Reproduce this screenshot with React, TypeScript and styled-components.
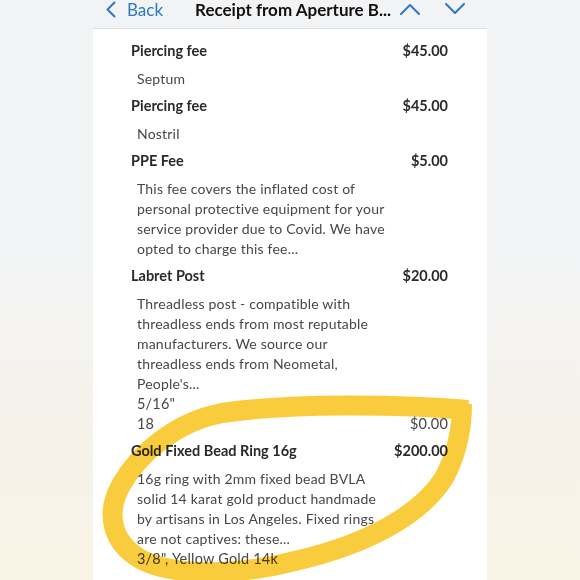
import React from "react";
import styled, { createGlobalStyle } from "styled-components";

type Item = {
  name: string;
  price: string;
  lines: string[];
  extra?: { left: string; right?: string }[];
};

const items: Item[] = [
  { name: "Piercing fee", price: "$45.00", lines: ["Septum"] },
  { name: "Piercing fee", price: "$45.00", lines: ["Nostril"] },
  {
    name: "PPE Fee",
    price: "$5.00",
    lines: [
      "This fee covers the inflated cost of",
      "personal protective equipment for your",
      "service provider due to Covid. We have",
      "opted to charge this fee...",
    ],
  },
  {
    name: "Labret Post",
    price: "$20.00",
    lines: [
      "Threadless post - compatible with",
      "threadless ends from most reputable",
      "manufacturers. We source our",
      "threadless ends from Neometal,",
      "People's...",
    ],
    extra: [{ left: '5/16"' }, { left: "18", right: "$0.00" }],
  },
  {
    name: "Gold Fixed Bead Ring 16g",
    price: "$200.00",
    lines: [
      "16g ring with 2mm fixed bead BVLA",
      "solid 14 karat gold product handmade",
      "by artisans in Los Angeles. Fixed rings",
      "are not captives: these...",
    ],
    extra: [{ left: '3/8", Yellow Gold 14k' }],
  },
];

const GlobalStyle = createGlobalStyle`
  body {
    margin: 0;
    font-family: Lato, "Liberation Sans", sans-serif;
  }
`;

const Page = styled.div`
  position: relative;
  width: 580px;
  height: 580px;
  overflow: hidden;
  display: flex;
  flex-direction: column;
  background: linear-gradient(180deg, #f2f3f5 0%, #f3f4f5 45%, #f6f2ea 75%, #faf4e6 100%);
`;

const NavBar = styled.div`
  height: 28px;
  flex-shrink: 0;
  display: flex;
  align-items: flex-start;
  padding: 1px 0 0 106px;
  box-sizing: border-box;
`;

const BackButton = styled.div`
  display: flex;
  align-items: flex-start;
  gap: 11px;
  color: #2e79c6;
  font-size: 17px;
  line-height: 17px;
`;

const Title = styled.div`
  margin-left: 32px;
  font-size: 17px;
  line-height: 17px;
  font-weight: 700;
  color: #111;
  white-space: nowrap;
`;

const Arrows = styled.div`
  display: flex;
  gap: 25px;
  margin-left: 9px;
  margin-top: 2px;
`;

const Sheet = styled.div`
  flex: 1;
  margin: 0 93px;
  background: #fff;
  border-top: 1px solid #dedfe1;
  padding: 12px 39px 0 38px;
`;

const LineItem = styled.div`
  margin-bottom: 7.5px;
`;

const Row = styled.div<{ $strong?: boolean }>`
  display: flex;
  justify-content: space-between;
  line-height: 20px;
  font-size: 14.5px;
  letter-spacing: ${(p) => (p.$strong ? "0" : "0.2px")};
  font-weight: ${(p) => (p.$strong ? 700 : 400)};
  color: ${(p) => (p.$strong ? "#2a2a2a" : "#474747")};
`;

const Indented = styled.span`
  padding-left: 6px;
`;

const Details = styled.div`
  margin-top: 7.5px;
  padding-left: 6px;
  font-size: 14px;
  letter-spacing: 0.2px;
  line-height: 20px;
  color: #474747;
`;

const Highlight = styled.svg`
  position: absolute;
  inset: 0;
  pointer-events: none;
  mix-blend-mode: multiply;
`;

const Chevron = ({ d, w = 20, h = 12 }: { d: string; w?: number; h?: number }) => (
  <svg width={w} height={h} viewBox={`0 0 ${w} ${h}`} fill="none">
    <path d={d} stroke="#2e79c6" strokeWidth="2" strokeLinecap="round" strokeLinejoin="round" />
  </svg>
);

export default function App() {
  return (
    <>
      <GlobalStyle />
      <Page>
        <NavBar>
          <BackButton>
            <Chevron w={10} h={17} d="M8.5 1.5 L1.5 8.5 L8.5 15.5" />
            <span>Back</span>
          </BackButton>
          <Title>Receipt from Aperture B...</Title>
          <Arrows>
            <Chevron d="M1 11 L10 2 L19 11" />
            <Chevron d="M1 1 L10 10 L19 1" />
          </Arrows>
        </NavBar>
        <Sheet>
          {items.map((item, i) => (
            <LineItem key={i}>
              <Row $strong>
                <span>{item.name}</span>
                <span>{item.price}</span>
              </Row>
              <Details>
                {item.lines.map((l, j) => (
                  <div key={j}>{l}</div>
                ))}
              </Details>
              {item.extra?.map((e, j) => (
                <Row key={j}>
                  <Indented>{e.left}</Indented>
                  {e.right && <span>{e.right}</span>}
                </Row>
              ))}
            </LineItem>
          ))}
        </Sheet>
        <Highlight width="580" height="580" viewBox="0 0 580 580">
          <path
            d="M468 410 C400 404, 290 403, 222 413 C176 422, 140 452, 121 485 C106 512, 110 542, 142 560 C178 578, 245 574, 295 561 C365 545, 420 516, 444 478 C458 452, 462 428, 462 404"
            fill="none"
            stroke="#f8c82c"
            strokeWidth="20"
            strokeLinecap="butt"
            strokeLinejoin="round"
            opacity="0.92"
          />
        </Highlight>
      </Page>
    </>
  );
}
